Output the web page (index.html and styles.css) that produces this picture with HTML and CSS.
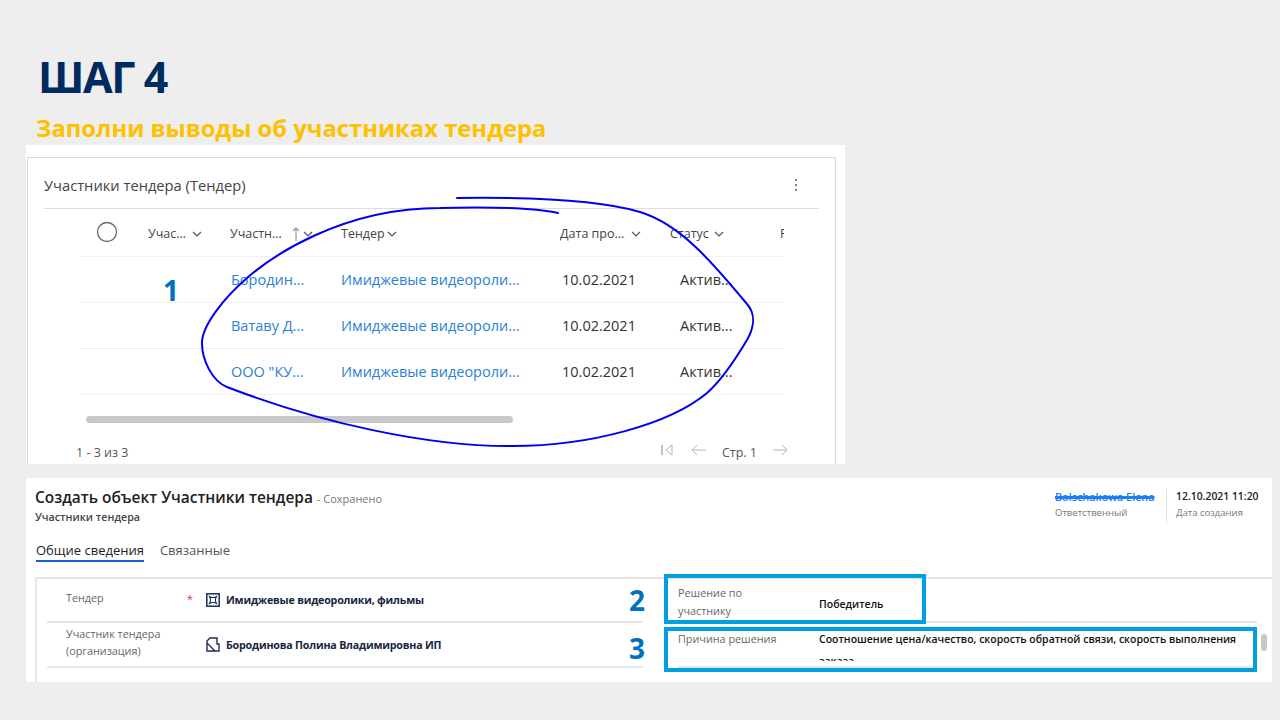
FILE: index.html
```html
<!DOCTYPE html>
<html lang="ru">
<head>
<meta charset="utf-8">
<title>Шаг 4</title>
<link rel="stylesheet" href="styles.css">
</head>
<body>
<svg class="defs" width="0" height="0" aria-hidden="true">
  <symbol id="chev" viewBox="0 0 10 6"><path d="M1 1l4 4 4-4" fill="none" stroke="#555" stroke-width="1.2"/></symbol>
</svg>
<main class="slide">
  <h1 class="title">ШАГ 4</h1>
  <p class="subtitle">Заполни выводы об участниках тендера</p>

  <section class="shot-list">
    <div class="card">
      <header class="card-head">
        <h2 class="card-title">Участники тендера (Тендер)</h2>
        <svg class="more" width="4" height="14" viewBox="0 0 4 14"><circle cx="2" cy="2" r="1" fill="#555"/><circle cx="2" cy="7" r="1" fill="#555"/><circle cx="2" cy="12" r="1" fill="#555"/></svg>
      </header>
      <div class="table">
        <div class="row row-head">
          <div class="cell cell-check"><svg width="22" height="22" viewBox="0 0 22 22"><circle cx="11" cy="11" r="9.5" fill="none" stroke="#5f6b7a" stroke-width="1.3"/></svg></div>
          <div class="cell th">Учас... <svg class="chev chev-a" width="10" height="6"><use href="#chev"/></svg></div>
          <div class="cell th">Участн...<svg class="sort" width="8" height="14" viewBox="0 0 8 14"><path d="M4 14V1M1 4l3-3 3 3" fill="none" stroke="#8a9aa8" stroke-width="1.200"/></svg><svg class="chev" width="10" height="6"><use href="#chev"/></svg></div>
          <div class="cell th">Тендер<svg class="chev" width="10" height="6"><use href="#chev"/></svg></div>
          <div class="cell th th-date">Дата про... <svg class="chev chev-a" width="10" height="6"><use href="#chev"/></svg></div>
          <div class="cell th">Статус <svg class="chev" width="10" height="6"><use href="#chev"/></svg></div>
          <div class="cell th">Р</div>
        </div>
        <div class="row">
          <div></div><div></div>
          <div class="cell link pad-1">Бородин...</div>
          <div class="cell link">Имиджевые видеороли...</div>
          <div class="cell pad-1">10.02.2021</div>
          <div class="cell pad-10">Актив...</div>
          <div></div>
        </div>
        <div class="row">
          <div></div><div></div>
          <div class="cell link pad-1">Ватаву Д...</div>
          <div class="cell link">Имиджевые видеороли...</div>
          <div class="cell pad-1">10.02.2021</div>
          <div class="cell pad-10">Актив...</div>
          <div></div>
        </div>
        <div class="row">
          <div></div><div></div>
          <div class="cell link pad-1">ООО "КУ...</div>
          <div class="cell link">Имиджевые видеороли...</div>
          <div class="cell pad-1">10.02.2021</div>
          <div class="cell pad-10">Актив...</div>
          <div></div>
        </div>
      </div>
      <div class="scrollbar"></div>
      <footer class="pager">
        <span class="count">1 - 3 из 3</span>
        <div class="pager-nav">
          <svg width="12" height="12" viewBox="0 0 12 12"><path d="M1 1v10" stroke="#b4b4b4" stroke-width="1.600"/><path d="M11 1L5 6l6 5z" fill="none" stroke="#b4b4b4" stroke-width="1"/></svg>
          <svg class="nav-gap" width="15" height="12" viewBox="0 0 15 12"><path d="M15 6H1M6 1L1 6l5 5" fill="none" stroke="#b4b4b4" stroke-width="1"/></svg>
          <span class="page">Стр. 1</span>
          <svg width="15" height="12" viewBox="0 0 15 12"><path d="M0 6h14M9 1l5 5-5 5" fill="none" stroke="#b4b4b4" stroke-width="1"/></svg>
        </div>
      </footer>
    </div>
  </section>

  <section class="shot-form">
    <header class="form-head">
      <div class="form-titles">
        <h2 class="form-title">Создать объект Участники тендера <small class="saved">- Сохранено</small></h2>
        <p class="form-entity">Участники тендера</p>
      </div>
      <div class="meta">
        <div class="meta-item meta-owner">
          <span class="owner-name">Bolschakowa Elena</span>
          <span class="meta-label">Ответственный</span>
        </div>
        <div class="meta-item meta-date">
          <span class="date-value">12.10.2021 11:20</span>
          <span class="meta-label">Дата создания</span>
        </div>
      </div>
    </header>
    <nav class="tabs">
      <span class="tab tab-active">Общие сведения</span>
      <span class="tab">Связанные</span>
    </nav>
    <div class="form-body">
      <div class="form-col form-left">
        <div class="field field-first">
          <span class="label label-up">Тендер</span>
          <span class="req">*</span>
          <span class="value">
            <svg class="ent" width="14" height="14" viewBox="0 0 14 14"><rect x=".8" y=".8" width="12.4" height="12.4" fill="none" stroke="#1c3150" stroke-width="1.500"/><path d="M3.500 3.500l2 1h3l2-1-1 2.500v2l1 2.500-2-1h-3l-2 1 1-2.500v-2z" fill="none" stroke="#1c3150" stroke-width="1.100"/></svg>
            Имиджевые видеоролики, фильмы
          </span>
        </div>
        <div class="field">
          <span class="label label-up">Участник тендера (организация)</span>
          <span class="req"></span>
          <span class="value">
            <svg class="ent" width="14" height="15" viewBox="0 0 14 15"><path d="M1 14V4l3-3h7v6h2v7zM1 6l8 8" fill="none" stroke="#1c3150" stroke-width="1.400"/></svg>
            Бородинова Полина Владимировна ИП
          </span>
        </div>
      </div>
      <div class="form-col form-right">
        <div class="field field-right field-first">
          <span class="label label-wrap">Решение по участнику</span>
          <span class="value-plain">Победитель</span>
        </div>
        <div class="field field-right field-clip">
          <span class="label label-reason">Причина решения</span>
          <div class="value-clip">Соотношение цена/качество, скорость обратной связи, скорость выполнения заказа</div>
        </div>
      </div>
      <div class="form-scroll"></div>
    </div>
  </section>

  <span class="mark mark-1">1</span>
  <span class="mark mark-2">2</span>
  <span class="mark mark-3">3</span>
  <div class="box box-2"></div>
  <div class="box box-3"></div>
  <svg class="scribble" width="1280" height="720" viewBox="0 0 1280 720" aria-hidden="true">
    <path d="M457 198C530 197 600 200 640 212C680 224 712 262 747 304C755 313 755 326 747 340C735 360 722 380 707 393C670 424 590 446 513 446C430 447 320 423 227 387C212 381 202 360 202 343C202 325 225 297 247 278C270 258 340 208 440 208C480 207 530 207 558 213" fill="none" stroke="#0000f0" stroke-width="2" stroke-linecap="round"/>
  </svg>
</main>
</body>
</html>
```
FILE: styles.css
```css
* { box-sizing: border-box; }
html, body { margin: 0; padding: 0; }
body {
  width: 1280px;
  height: 720px;
  overflow: hidden;
  background: #eeeeee;
  font-family: "Open Sans", "Noto Sans", sans-serif;
  color: #333;
}
.defs { position: absolute; }
.slide { position: relative; width: 1280px; height: 720px; padding-top: 47px; }
.title {
  margin: 0 0 0 38px;
  font-size: 43px;
  line-height: 60px;
  font-weight: 700;
  letter-spacing: -1.400px;
  color: #002b60;
}
.subtitle {
  margin: 5px 0 0 36px;
  height: 33px;
  font-size: 23.800px;
  line-height: 32px;
  font-weight: 700;
  color: #ffc000;
}
.shot-list {
  width: 819px;
  height: 319px;
  margin-left: 26px;
  background: #fff;
  padding: 12px 9px 0 1px;
  overflow: hidden;
}
.card {
  height: 320px;
  border: 1px solid #d8d8d8;
  border-width: 1px 1px 0 1px;
  display: flex;
  flex-direction: column;
}
.card-head {
  height: 51px;
  margin: 0 16px;
  flex: none;
  border-bottom: 1px solid #dcdcdc;
  display: flex;
  align-items: center;
  justify-content: space-between;
  padding: 4px 21px 0 0;
}
.card-title { margin: 0; font-size: 14.700px; font-weight: 400; color: #444; }
.more { display: block; }
.table { width: 704px; margin-left: 52px; overflow: hidden; flex: none; }
.row {
  display: grid;
  grid-template-columns: 68px 82px 111px 220px 109px 110px 4px;
  height: 46px;
  border-bottom: 1px solid #f1f1f1;
  font-size: 14.500px;
  color: #333;
}
.row-head { height: 48px; font-size: 12.500px; font-weight: 400; }
.cell { display: flex; align-items: center; white-space: pre; overflow: hidden; }
.cell-check { padding: 0 0 2px 16px; }
.th { color: #444; padding-top: 2px; }
.th-date { margin-left: -1px; }
.chev { margin-left: 2px; }
.chev-a { margin-left: 3px; }
.sort { margin: 0 1px 0 10px; }
.link { color: #2b7fd6; }
.pad-1 { padding-left: 1px; }
.pad-10 { padding-left: 10px; }
.scrollbar {
  width: 427px;
  height: 7px;
  margin: 21px 0 0 58px;
  border-radius: 4px;
  background: #c8c8c8;
  flex: none;
}
.pager {
  display: flex;
  justify-content: space-between;
  align-items: center;
  margin: 20px 0 0 48px;
  width: 712px;
  font-size: 12.500px;
  color: #555;
}
.pager-nav { display: flex; align-items: center; }
.pager-nav svg { margin-bottom: 4px; }
.nav-gap { margin-left: 18px; }
.page { margin: 1px 16px 0 16px; }
.shot-form {
  width: 1246px;
  height: 204px;
  margin: 14px 0 0 26px;
  background: #fff;
  position: relative;
  overflow: hidden;
}
.form-head {
  display: flex;
  justify-content: space-between;
  padding: 8px 14px 0 9px;
  height: 54px;
}
.form-title { margin: 0; font-size: 15.450px; line-height: 22px; font-weight: 600; color: #222; }
.saved { font-size: 11px; font-weight: 400; color: #777; }
.form-entity { margin: -1px 0 0; font-size: 10.700px; line-height: 16px; font-weight: 600; color: #444; }
.meta { display: flex; padding-top: 3px; }
.meta-item { display: flex; flex-direction: column; height: 34px; }
.meta-owner { padding-right: 10px; width: 111px; }
.meta-date { border-left: 1px solid #dedede; padding-left: 9px; width: 92px; }
.owner-name {
  font-size: 10.800px;
  line-height: 15px;
  font-weight: 600;
  color: #1a80f0;
  text-decoration: line-through;
  text-decoration-thickness: 3px;
  white-space: nowrap;
}
.date-value { font-size: 10.400px; line-height: 15px; font-weight: 600; color: #222; white-space: nowrap; }
.meta-label { font-size: 9.500px; line-height: 17px; color: #777; white-space: nowrap; }
.tabs { display: flex; gap: 16px; padding-left: 10px; height: 30px; font-size: 13px; }
.tab { color: #555; height: 30px; padding-top: 9px; line-height: 18px; }
.tab-active { color: #222; border-bottom: 2px solid #1a5fd0; }
.form-body {
  display: grid;
  grid-template-columns: 629px 608px;
  margin: 15px 0 0 9px;
  border-top: 2px solid #e6e6e6;
  border-left: 2px solid #e6e6e6;
  height: 120px;
  position: relative;
}
.form-col { min-width: 0; }
.form-left { padding: 0 23px 0 10px; }
.form-right { padding: 0 17px 0 7px; }
.field {
  display: grid;
  grid-template-columns: 121px 19px 1fr;
  align-items: center;
  height: 45px;
  padding-left: 19px;
  border-bottom: 2px solid #e6e6e6;
  font-size: 10.800px;
}
.field-first { height: 44px; }
.label { color: #666; line-height: 17px; }
.label-up { margin-top: -5px; }
.req { color: #d9303a; margin-top: -4px; }
.value { display: flex; align-items: center; gap: 6px; font-weight: 700; color: #16263f; font-size: 10.700px; letter-spacing: -0.200px; white-space: nowrap; }
.ent { flex: none; }
.field-right { grid-template-columns: 141px 1fr; padding-left: 0; margin-left: 5px; }
.label-wrap { width: 90px; line-height: 18px; margin-top: 4px; }
.value-plain { font-size: 10.500px; font-weight: 600; color: #111; line-height: 18px; margin-top: 7px; }
.field-clip { align-items: start; padding-top: 5px; }
.label-reason { margin-top: 2px; }
.value-clip { height: 33px; overflow: hidden; width: 431px; font-size: 10.500px; font-weight: 600; color: #111; line-height: 22px; }
.form-scroll {
  position: absolute;
  left: 1224px;
  top: 55px;
  width: 6px;
  height: 17px;
  border-radius: 3px;
  background: #c8c8c8;
}
.mark { position: absolute; font-size: 28px; line-height: 38px; font-weight: 700; color: #0070c0; }
.mark-1 { left: 163px; top: 271px; }
.mark-2 { left: 629px; top: 581px; }
.mark-3 { left: 629px; top: 629px; }
.box { position: absolute; border: 4px solid #00a0e3; }
.box-2 { left: 664px; top: 574px; width: 262px; height: 50px; }
.box-3 { left: 664px; top: 627px; width: 593px; height: 45px; }
.scribble { position: absolute; left: 0; top: 0; pointer-events: none; }
```
